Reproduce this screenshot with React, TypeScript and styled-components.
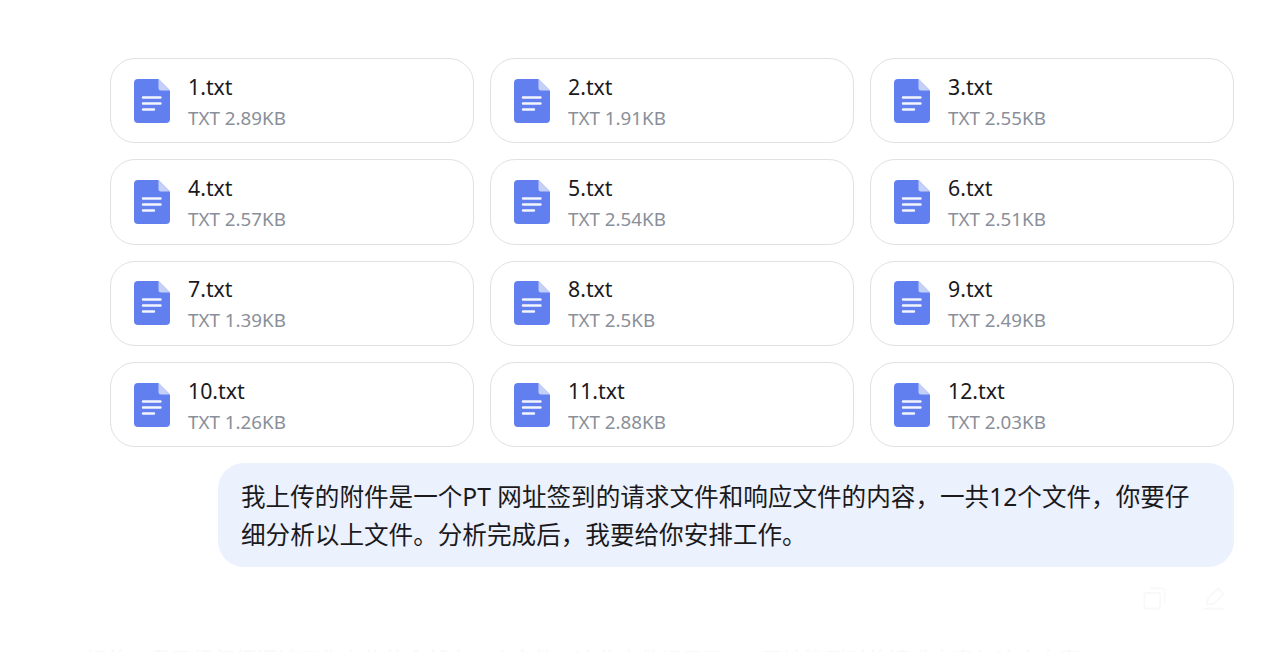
import React from 'react';
import styled, { createGlobalStyle } from 'styled-components';

const GlobalStyle = createGlobalStyle`
  html, body {
    margin: 0;
    height: 652px;
    overflow: hidden;
    background: #fff;
    font-family: "Noto Sans", "Noto Sans CJK SC", sans-serif;
  }
`;

const files = [
  { name: '1.txt', size: 'TXT 2.89KB' },
  { name: '2.txt', size: 'TXT 1.91KB' },
  { name: '3.txt', size: 'TXT 2.55KB' },
  { name: '4.txt', size: 'TXT 2.57KB' },
  { name: '5.txt', size: 'TXT 2.54KB' },
  { name: '6.txt', size: 'TXT 2.51KB' },
  { name: '7.txt', size: 'TXT 1.39KB' },
  { name: '8.txt', size: 'TXT 2.5KB' },
  { name: '9.txt', size: 'TXT 2.49KB' },
  { name: '10.txt', size: 'TXT 1.26KB' },
  { name: '11.txt', size: 'TXT 2.88KB' },
  { name: '12.txt', size: 'TXT 2.03KB' }
];

const FileIcon = () => (
  <StyledFileIcon viewBox="0 0 36 44" aria-hidden="true">
    <path
      fill="#627ff0"
      d="M4 0h20.500L36 11.500V40a4 4 0 0 1-4 4H4a4 4 0 0 1-4-4V4a4 4 0 0 1 4-4z"
    />
    <path fill="#c5d0f8" d="M24.500 0L36 11.500H27a2.500 2.500 0 0 1-2.500-2.500z" />
    <path
      fill="none"
      stroke="#f4f6fe"
      strokeWidth="2.400"
      strokeLinecap="round"
      d="M9 18.500h17.500M9 24.500h17.500M9 30.500h11"
    />
  </StyledFileIcon>
);

export default function App() {
  return (
    <>
      <GlobalStyle />
      <Page>
        <FileGrid>
          {files.map((file) => (
            <FileCard key={file.name}>
              <FileIcon />
              <FileInfo>
                <FileName>{file.name}</FileName>
                <FileSize>{file.size}</FileSize>
              </FileInfo>
            </FileCard>
          ))}
        </FileGrid>
        <Bubble>
          我上传的附件是一个PT 网址签到的请求文件和响应文件的内容，一共12个文件，你要仔细分析以上文件。分析完成后，我要给你安排工作。
        </Bubble>
        <Actions>
          <ActionIcon viewBox="0 0 24 24">
            <rect x="3" y="7" width="14" height="14" rx="2" />
            <path d="M8 3h11a2 2 0 0 1 2 2v11" />
          </ActionIcon>
          <ActionIcon viewBox="0 0 24 24">
            <path d="M3 21h18M6 17l1-5L16 3l5 5-9 9z" />
          </ActionIcon>
        </Actions>
        <FadedReply>
          好的，我已经仔细阅读了你上传的全部十二个文件，这些文件记录了 PT 网址签到时的请求内容与响应内容
        </FadedReply>
      </Page>
    </>
  );
}

const Page = styled.main`
  width: 1280px;
  height: 652px;
  box-sizing: border-box;
  padding: 58px 46px 0 110px;
  overflow: hidden;
  display: flex;
  flex-direction: column;
  align-items: flex-end;
`;

const FileGrid = styled.section`
  width: 100%;
  flex: none;
  display: grid;
  grid-template-columns: repeat(3, 1fr);
  gap: 16px;
`;

const FileCard = styled.article`
  height: 85.330px;
  box-sizing: border-box;
  padding-left: 23px;
  display: flex;
  align-items: center;
  gap: 18px;
  background: #fff;
  border: 1px solid #dfe1e5;
  border-radius: 25px;
`;

const StyledFileIcon = styled.svg`
  width: 36px;
  height: 44px;
  flex: none;
`;

const FileInfo = styled.div`
  display: flex;
  flex-direction: column;
  gap: 5px;
  padding-top: 3px;
`;

const FileName = styled.span`
  font-size: 21.300px;
  line-height: 26px;
  color: #1a1a1c;
`;

const FileSize = styled.span`
  font-size: 18.800px;
  line-height: 26px;
  color: #8a8f99;
`;

const Bubble = styled.p`
  width: 1016px;
  height: 104px;
  flex: none;
  box-sizing: border-box;
  margin: 16px 0 0;
  padding: 15px 40px 0 23px;
  background: #ecf1fe;
  border-radius: 26px;
  font-size: 24.600px;
  line-height: 38px;
  color: #1a1a1c;
`;

const Actions = styled.div`
  display: flex;
  flex: none;
  gap: 32px;
  margin: 18px 7px 0 0;
`;

const ActionIcon = styled.svg`
  width: 27px;
  height: 27px;
  fill: none;
  stroke: #f8f8f9;
  stroke-width: 1.500;
`;

const FadedReply = styled.p`
  align-self: flex-start;
  flex: none;
  width: 1124px;
  margin: 33px 0 0 -24px;
  font-size: 21.300px;
  line-height: 30px;
  white-space: nowrap;
  color: #f8f8f8;
`;
